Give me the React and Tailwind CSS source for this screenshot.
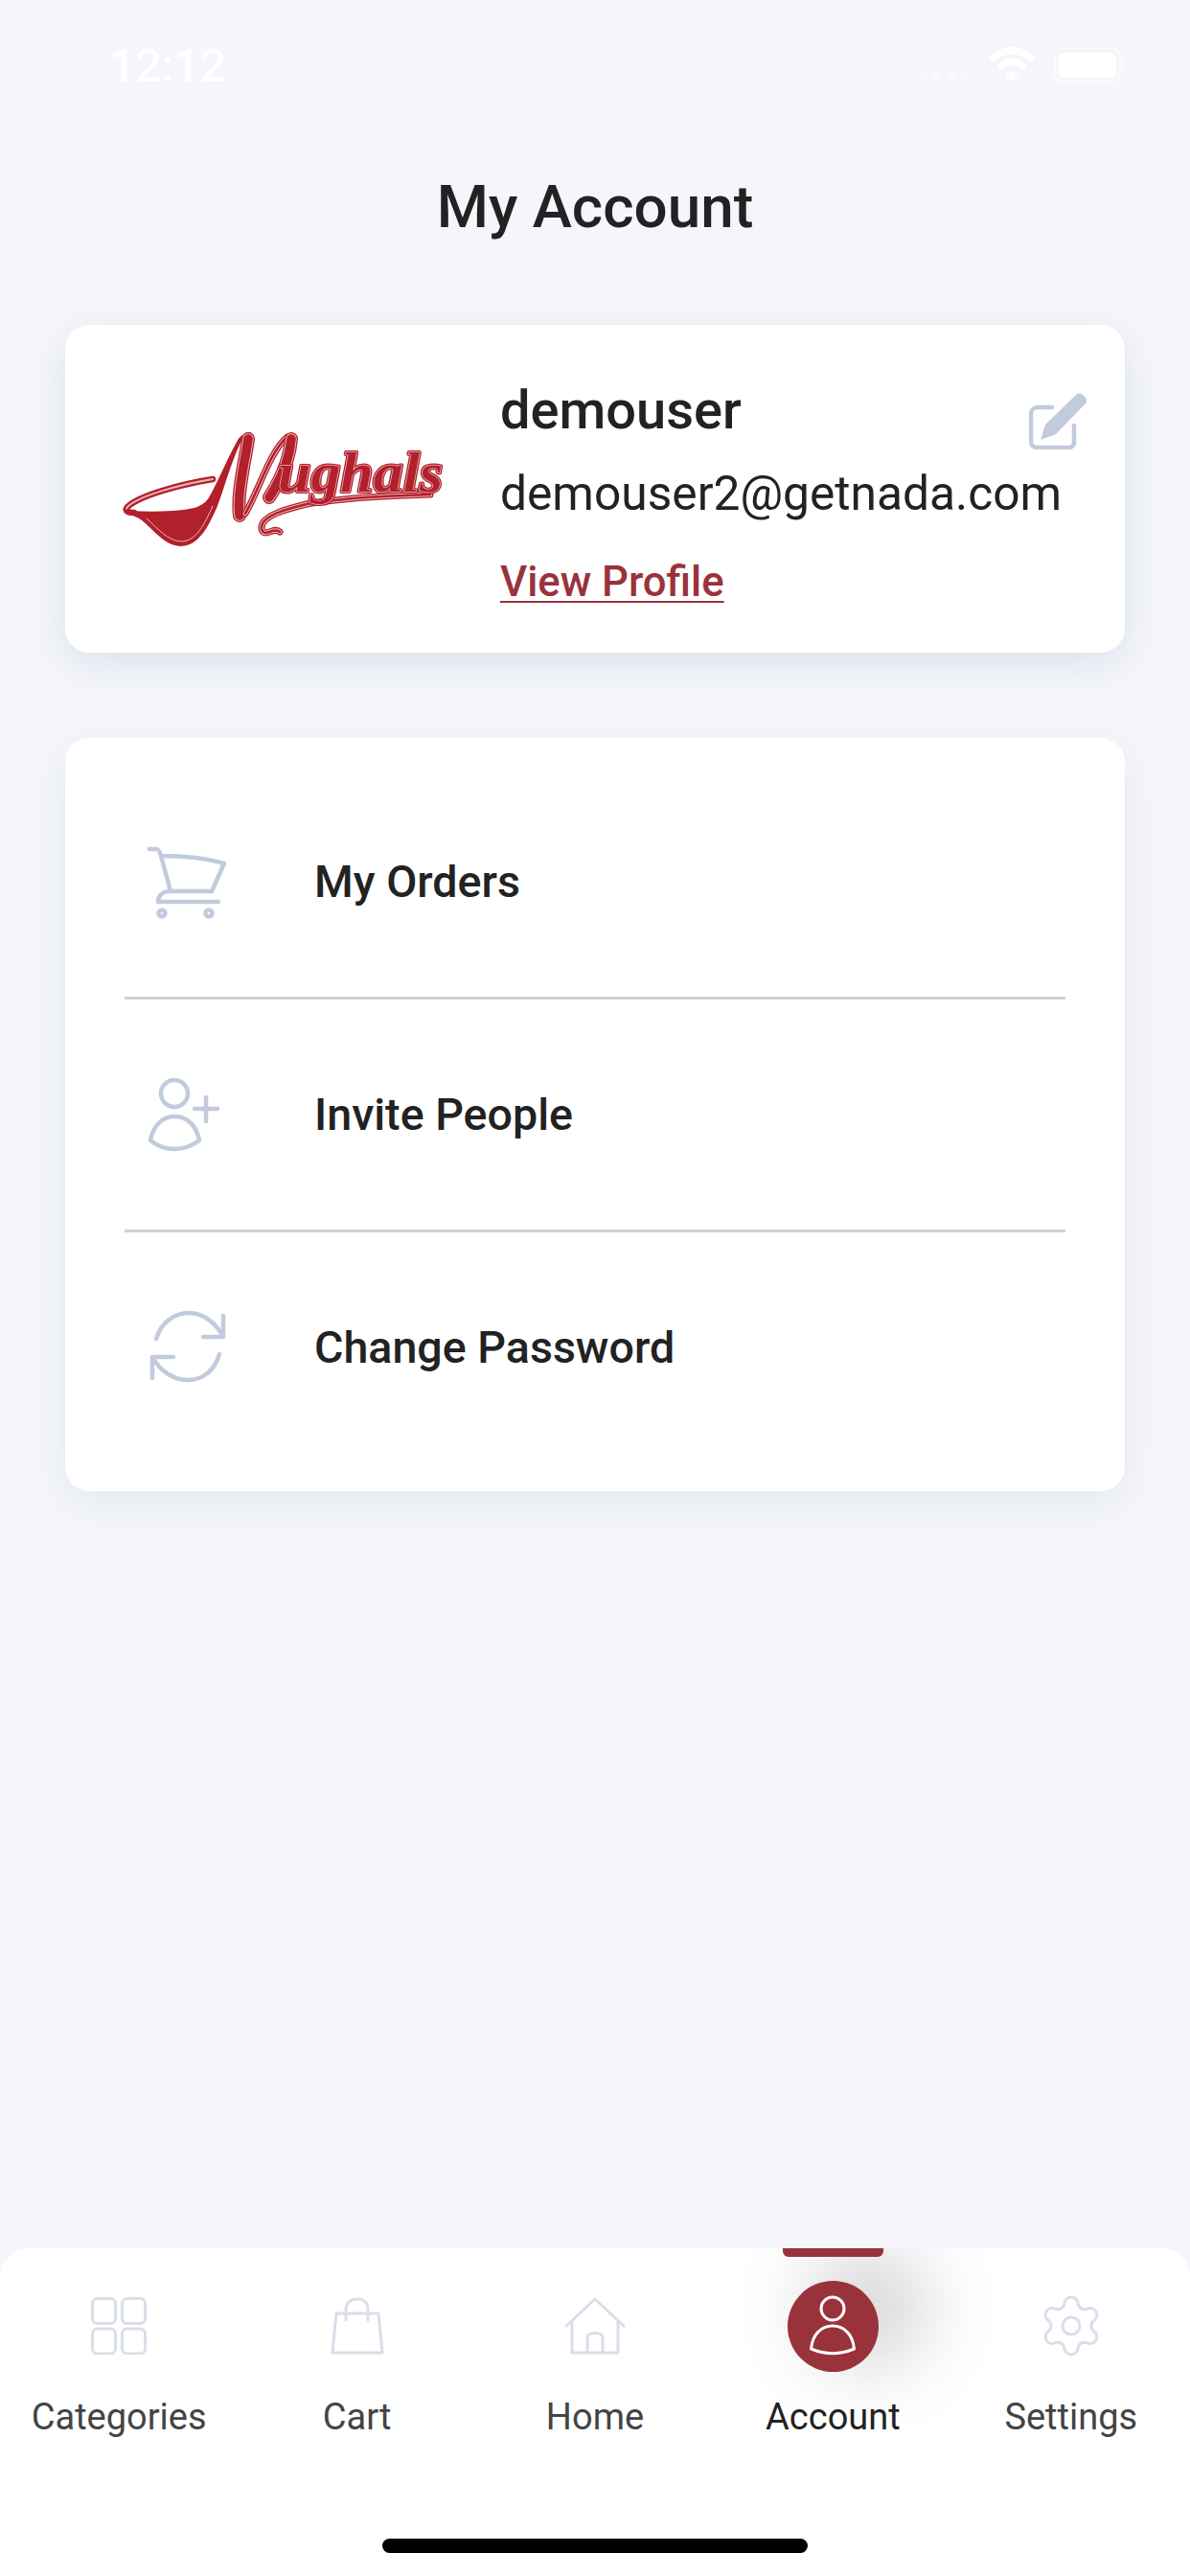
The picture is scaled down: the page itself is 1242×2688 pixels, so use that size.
import React from 'react';
import { Settings } from 'lucide-react';

const FONT = 'font-["Roboto",sans-serif]';
const RED = '#b2202c';
const PALE = '#eab4b9';

// Logo: ladle + M swash drawn, the rest of the name stays as real text
const Ribbon = ({ d, w }) => (
  <>
    <path d={d} fill="none" stroke={RED} strokeWidth={w} strokeLinecap="round" strokeLinejoin="round" />
    <path d={d} fill="none" stroke={PALE} strokeWidth={w - 2.5} strokeLinecap="round" strokeLinejoin="round" />
    <path d={d} fill="none" stroke={RED} strokeWidth={Math.max(w - 4.5, 0.6)} strokeLinecap="round" strokeLinejoin="round" />
  </>
);

const Logo = () => (
  <svg width="350" height="140" viewBox="120 440 350 140" className="shrink-0 self-center">
    {/* handle */}
    <path d="M222 500 C190 505 145 517 133 529 C130 533 133 535 140 535" fill="none" stroke={RED} strokeWidth="6.5" strokeLinecap="round" />
    <path d="M222 500 C190 505 145 517 133 529 C130 533 133 535 140 535" fill="none" stroke={PALE} strokeWidth="2" strokeLinecap="round" />
    {/* bowl and stem */}
    <path
      d="M130 532 C138 538 146 538 152 545 C164 556 174 569 189 569 C207 569 217 548 225 530 C232 514 240 480 252 458 C256 451 262 450 264 456 C262 452 255 452 250 458 C238 478 228 505 218 521 C210 532 195 533 180 534 C165 535 150 535 138 534 Z"
      fill={RED}
      stroke={RED}
      strokeWidth="2"
      strokeLinejoin="round"
    />
    <path d="M153 541 C165 552 175 564 189 565 C205 565 214 546 222 528" fill="none" stroke={PALE} strokeWidth="1" />
    {/* M strokes */}
    <Ribbon d="M259 458 C256 480 247 515 250 538" w={14} />
    <Ribbon d="M256 536 C270 512 282 470 300 456" w={7} />
    <Ribbon d="M304 458 C302 482 290 505 281 519" w={14} />
    {/* underline swash */}
    <Ribbon d="M292 555 C286 549 276 562 273 552 C271 538 300 531 320 526 C360 519 410 517 449 516" w={7} />
    {/* rest of the name */}
    <g fontFamily='"Liberation Serif", serif' fontStyle="italic" fontWeight="700" fontSize="60">
      <text x="290" y="513" textLength="172" lengthAdjust="spacingAndGlyphs" fill={RED} stroke={RED} strokeWidth="4" strokeLinejoin="round">ughals</text>
      <text x="290" y="513" textLength="172" lengthAdjust="spacingAndGlyphs" fill="none" stroke={PALE} strokeWidth="1.5" strokeLinejoin="round">ughals</text>
      <text x="290" y="513" textLength="172" lengthAdjust="spacingAndGlyphs" fill={RED}>ughals</text>
    </g>
  </svg>
);

const ICON = '#c2cbdd';
const TAB_ICON = '#d9deea';

const MENU = [
  {
    label: 'My Orders',
    row: 'h-[243px] border-b-[3px] border-[#cfcfd4]',
    icon: (
      <g>
        <path d="M36 26 H43 C46 26 47 29 48 33 L58 70 M49 33 C75 33 97 36 114 41 L101 70 H58 C49 70 45 75 45 81 H108" />
        <circle cx="49" cy="93" r="3.5" />
        <circle cx="98" cy="93" r="3.5" />
      </g>
    ),
  },
  {
    label: 'Invite People',
    row: 'h-[243px] border-b-[3px] border-[#cfcfd4]',
    icon: (
      <g transform="translate(0 -3)">
        <circle cx="62" cy="41" r="14" />
        <path d="M37 90 C40 74 50 65 62 65 C75 65 85 74 88 90 C72 102 52 102 37 90 Z" />
        <path d="M83 57 H107 M95 45 V70" />
      </g>
    ),
  },
  {
    label: 'Change Password',
    row: 'h-[240px]',
    icon: (
      <g transform="translate(0 4)">
        <path d="M43 47 C48 30 62 20 77 20 C92 20 105 30 113 45 M113 23 V45 H92" />
        <path d="M109 63 C104 80 92 90 76 90 C62 90 48 82 39 66 M39 88 V66 H61" />
      </g>
    ),
  },
];

const TABS = [
  {
    label: 'Categories',
    icon: (
      <svg width="58" height="60" viewBox="0 0 58 60" fill="none" stroke={TAB_ICON} strokeWidth="3">
        <rect x="1.5" y="1.5" width="24" height="26" rx="5" />
        <rect x="32.5" y="1.5" width="24" height="26" rx="5" />
        <rect x="1.5" y="33" width="24" height="26" rx="5" />
        <rect x="32.5" y="33" width="24" height="26" rx="5" />
      </svg>
    ),
  },
  {
    label: 'Cart',
    icon: (
      <svg width="56" height="60" viewBox="0 0 56 60" fill="none" stroke={TAB_ICON} strokeWidth="3" strokeLinecap="round" strokeLinejoin="round">
        <path d="M6 17 H50 L54 58 H2 Z" />
        <path d="M16 24 V13 C16 6 21 2 28 2 C35 2 39 6 39 13 V24" />
      </svg>
    ),
  },
  {
    label: 'Home',
    icon: (
      <svg width="64" height="60" viewBox="0 0 64 60" fill="none" stroke={TAB_ICON} strokeWidth="3" strokeLinecap="round" strokeLinejoin="round">
        <path d="M2 30 L32 2 L62 30" />
        <path d="M8 25 V58 H56 V25" />
        <path d="M24 58 V42 C24 36 40 36 40 42 V58" />
      </svg>
    ),
  },
  {
    label: 'Account',
    active: true,
    icon: (
      <div className="flex h-[95px] w-[95px] shrink-0 items-center justify-center rounded-full bg-[#9a323c] shadow-[36px_-20px_80px_16px_rgba(0,0,0,0.17)]">
        <svg width="50" height="64" viewBox="0 0 50 64" fill="none" stroke="#fff" strokeWidth="3" strokeLinejoin="round">
          <circle cx="25" cy="14" r="12" />
          <path d="M2.5 56 C4 41 13 32 25 32 C37 32 46 41 47.5 56 C33 62 17 62 2.5 56 Z" />
        </svg>
      </div>
    ),
  },
  {
    label: 'Settings',
    icon: <Settings size={72} color={TAB_ICON} strokeWidth={1} className="shrink-0" />,
  },
];

export default function App() {
  return (
    <div className={`${FONT} relative flex h-[2688px] w-[1242px] flex-col overflow-hidden bg-[#f4f6fb]`}>
      {/* status bar */}
      <div className="flex h-[181px] items-start justify-between pl-[114px] pr-[68px] pt-[41px]">
        <span className="text-[48px] font-medium leading-[56px] text-white">12:12</span>
        <div className="mt-[8px] flex items-end gap-[20px]">
          <div className="mb-[1px] flex gap-[6px]">
            <span className="h-[10px] w-[9px] rounded-[3px] bg-white/30" />
            <span className="h-[10px] w-[9px] rounded-[3px] bg-white/30" />
            <span className="h-[10px] w-[9px] rounded-[3px] bg-white/30" />
            <span className="h-[10px] w-[9px] rounded-[3px] bg-white/30" />
          </div>
          <svg width="48" height="37" viewBox="0 0 48 37" fill="#fff">
            <path d="M24 0 C33 0 41 4 48 10 L45 17 C39 11 32 8 24 8 C16 8 9 11 3 17 L0 10 C7 4 15 0 24 0 Z" />
            <path d="M24 12 C30 12 35 15 39 19 L36 25 C33 21 29 19 24 19 C19 19 15 21 12 25 L9 19 C13 15 18 12 24 12 Z" />
            <path d="M24 26 C27 26 29 27 31 28 L24 37 L17 28 C19 27 21 26 24 26 Z" />
          </svg>
          <div className="flex items-center">
            <div className="flex h-[37px] w-[70px] items-center justify-center rounded-[9px] border-2 border-white/50">
              <div className="h-[26px] w-[60px] rounded-[5px] bg-white" />
            </div>
            <div className="ml-[1px] h-[12px] w-[3px] rounded-r-sm bg-white/60" />
          </div>
        </div>
      </div>

      <h1 className="text-center text-[62px] font-medium leading-[70px] text-[#222222]">My Account</h1>

      {/* profile card */}
      <div className="relative mx-[68px] mt-[88px] flex h-[342px] rounded-[25px] bg-white pl-[52px] shadow-[0_12px_40px_rgba(70,80,120,0.12)]">
        <Logo />
        <div className="ml-[52px] pt-[57px] text-[#222222]">
          <div className="text-[56px] font-medium leading-[64px]">demouser</div>
          <div className="mt-[25px] text-[49.7px] leading-[60px]">demouser2@getnada.com</div>
          <a className="mt-[36px] block text-[43.7px] font-medium leading-[52px] text-[#9a323c] underline decoration-2 underline-offset-[5px]">View Profile</a>
        </div>
        <svg className="absolute right-[40px] top-[70px]" width="60" height="60" viewBox="0 0 60 60" fill="none">
          <path d="M24 16 H9 C5 16 2 19 2 23 V52 C2 56 5 58 9 58 H41 C45 58 47 56 47 52 V35" stroke={ICON} strokeWidth="4.5" strokeLinecap="round" />
          <path d="M12 50 L17 34 L49 3 C51 1 54 1 56 3 L59 6 C61 8 61 10 59 12 L28 44 Z" fill={ICON} />
        </svg>
      </div>

      {/* menu card */}
      <div className="mx-[68px] mt-[89px] rounded-[25px] bg-white py-[30px] shadow-[0_12px_40px_rgba(70,80,120,0.08)]">
        {MENU.map((item) => (
          <div key={item.label} className={`mx-[62px] flex items-center ${item.row}`}>
            <svg
              width="160"
              height="120"
              viewBox="0 0 160 120"
              fill="none"
              stroke={ICON}
              strokeWidth="4.5"
              strokeLinecap="round"
              strokeLinejoin="round"
              className="-ml-[10px] shrink-0"
            >
              {item.icon}
            </svg>
            <span className="ml-[48px] text-[46.6px] font-medium leading-[54px] text-[#222222]">{item.label}</span>
          </div>
        ))}
      </div>

      {/* tab bar */}
      <div className="relative mt-auto flex h-[342px] flex-col overflow-hidden rounded-t-[30px] bg-white pt-[51px]">
        <div className="grid grid-cols-5">
          {TABS.map((tab) => (
            <div key={tab.label} className="relative flex flex-col items-center">
              {tab.active && <div className="absolute -top-[51px] z-10 h-[9px] w-[105px] rounded-b-md bg-[#9a323c]" />}
              <div className="flex h-[60px] items-center justify-center">{tab.icon}</div>
              <span className={`relative mt-[43px] text-[38px] leading-[44px] ${tab.active ? 'text-[#222222]' : 'text-[#444444]'}`}>{tab.label}</span>
            </div>
          ))}
        </div>
        <div className="mt-[105px] h-[15px] w-[444px] self-center rounded-full bg-black" />
      </div>
    </div>
  );
}
